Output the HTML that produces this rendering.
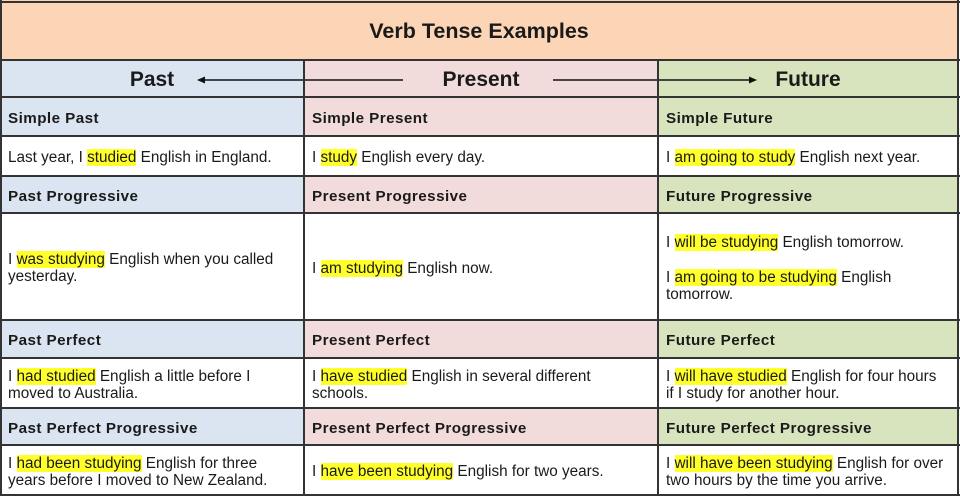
<!DOCTYPE html>
<html><head><meta charset="utf-8"><style>
body{margin:0;width:960px;height:496px;background:#fff;position:relative;overflow:hidden;font-family:"Liberation Sans",Arial,sans-serif;color:#1a1a1a}
.c{position:absolute;box-sizing:border-box;padding-left:8px;padding-top:3px;display:flex;flex-direction:column;justify-content:center;font-size:15.3px;line-height:17px;white-space:nowrap}
.h{font-weight:bold;font-size:15.2px;letter-spacing:0.45px}
.hl{background:#ffff2a}
.l{position:absolute;background:#333}
.b{background:#dbe5f1}.r{background:#f2dcdb}.g{background:#d8e4bd}
</style></head><body>
<div class="c" style="left:0;top:0;width:958px;height:61px;background:#fbd5b5;align-items:center;padding:2px 0 0 0;font-weight:bold;font-size:21.5px">Verb Tense Examples</div>
<div class="c b" style="left:0;top:61px;width:304px;height:36px;align-items:center;padding:0;font-weight:bold;font-size:21px">Past</div>
<div class="c r" style="left:304px;top:61px;width:354px;height:36px;align-items:center;padding:0;font-weight:bold;font-size:21px">Present</div>
<div class="c g" style="left:658px;top:61px;width:300px;height:36px;align-items:center;padding:0;font-weight:bold;font-size:21px">Future</div>
<svg style="position:absolute;left:195px;top:72px" width="570" height="16"><line x1="8" y1="8" x2="208" y2="8" stroke="#111" stroke-width="1.6"/><polygon points="2,8 10,4.5 10,11.5" fill="#111"/><line x1="358" y1="8" x2="556" y2="8" stroke="#111" stroke-width="1.6"/><polygon points="562,8 554,4.5 554,11.5" fill="#111"/></svg>

<div class="c b h" style="left:0;top:97px;width:304px;height:39px">Simple Past</div>
<div class="c r h" style="left:304px;top:97px;width:354px;height:39px">Simple Present</div>
<div class="c g h" style="left:658px;top:97px;width:300px;height:39px">Simple Future</div>
<div class="c" style="left:0;top:136px;width:304px;height:40px"><div>Last year, I <span class="hl">studied</span> English in England.</div></div>
<div class="c" style="left:304px;top:136px;width:354px;height:40px"><div>I <span class="hl">study</span> English every day.</div></div>
<div class="c" style="left:658px;top:136px;width:300px;height:40px"><div>I <span class="hl">am going to study</span> English next year.</div></div>

<div class="c b h" style="left:0;top:176px;width:304px;height:37px">Past Progressive</div>
<div class="c r h" style="left:304px;top:176px;width:354px;height:37px">Present Progressive</div>
<div class="c g h" style="left:658px;top:176px;width:300px;height:37px">Future Progressive</div>
<div class="c" style="left:0;top:213px;width:304px;height:107px"><div>I <span class="hl">was studying</span> English when you called<br>yesterday.</div></div>
<div class="c" style="left:304px;top:213px;width:354px;height:107px"><div>I <span class="hl">am studying</span> English now.</div></div>
<div class="c" style="left:658px;top:213px;width:300px;height:107px"><div>I <span class="hl">will be studying</span> English tomorrow.</div><div style="margin-top:18px">I <span class="hl">am going to be studying</span> English<br>tomorrow.</div></div>

<div class="c b h" style="left:0;top:320px;width:304px;height:38px">Past Perfect</div>
<div class="c r h" style="left:304px;top:320px;width:354px;height:38px">Present Perfect</div>
<div class="c g h" style="left:658px;top:320px;width:300px;height:38px">Future Perfect</div>
<div class="c" style="left:0;top:358px;width:304px;height:50px"><div>I <span class="hl">had studied</span> English a little before I<br>moved to Australia.</div></div>
<div class="c" style="left:304px;top:358px;width:354px;height:50px"><div>I <span class="hl">have studied</span> English in several different<br>schools.</div></div>
<div class="c" style="left:658px;top:358px;width:300px;height:50px"><div>I <span class="hl">will have studied</span> English for four hours<br>if I study for another hour.</div></div>

<div class="c b h" style="left:0;top:408px;width:304px;height:37px">Past Perfect Progressive</div>
<div class="c r h" style="left:304px;top:408px;width:354px;height:37px">Present Perfect Progressive</div>
<div class="c g h" style="left:658px;top:408px;width:300px;height:37px">Future Perfect Progressive</div>
<div class="c" style="left:0;top:445px;width:304px;height:50px"><div>I <span class="hl">had been studying</span> English for three<br>years before I moved to New Zealand.</div></div>
<div class="c" style="left:304px;top:445px;width:354px;height:50px"><div>I <span class="hl">have been studying</span> English for two years.</div></div>
<div class="c" style="left:658px;top:445px;width:300px;height:50px"><div>I <span class="hl">will have been studying</span> English for over<br>two hours by the time you arrive.</div></div>

<div class="l" style="left:0;top:1px;width:960px;height:2px"></div>
<div class="l" style="left:0;top:0;width:2px;height:496px"></div>
<div class="l" style="left:957px;top:0;width:2px;height:496px"></div>
<div class="l" style="left:0;top:494px;width:960px;height:2px"></div>
<div class="l" style="left:0;top:59px;width:960px;height:2px"></div>
<div class="l" style="left:0;top:96px;width:960px;height:2px"></div>
<div class="l" style="left:0;top:135px;width:960px;height:2px"></div>
<div class="l" style="left:0;top:175px;width:960px;height:2px"></div>
<div class="l" style="left:0;top:212px;width:960px;height:2px"></div>
<div class="l" style="left:0;top:319px;width:960px;height:2px"></div>
<div class="l" style="left:0;top:357px;width:960px;height:2px"></div>
<div class="l" style="left:0;top:407px;width:960px;height:2px"></div>
<div class="l" style="left:0;top:444px;width:960px;height:2px"></div>
<div class="l" style="left:303px;top:60px;width:2px;height:436px"></div>
<div class="l" style="left:657px;top:60px;width:2px;height:436px"></div>
</body></html>
